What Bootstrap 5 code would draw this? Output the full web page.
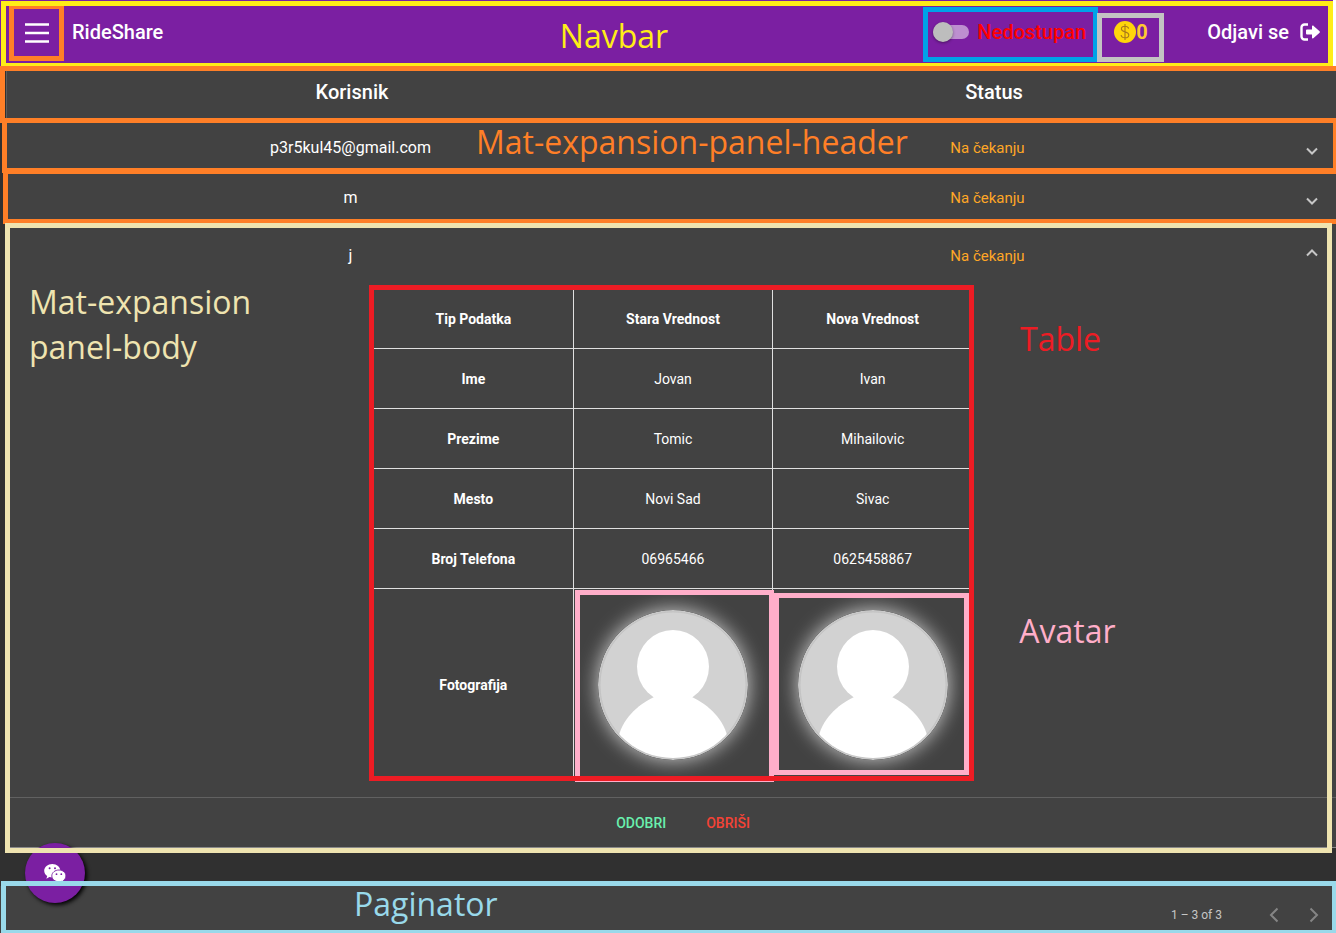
<!DOCTYPE html>
<html lang="sr-Latn">
<head>
<meta charset="utf-8">
<meta name="viewport" content="width=device-width, initial-scale=1">
<title>RideShare</title>
<link href="https://cdn.jsdelivr.net/npm/bootstrap@5.3.0/dist/css/bootstrap.min.css" rel="stylesheet">
<style>
  body { background: #303030; color: #fff; font-family: Roboto, sans-serif; font-size: 14px; line-height: 20px; overflow-x: hidden; }
  .app-bar { background: #7b1fa2; height: 66px; padding: 0 12px 2px 9px; font-size: 20px; font-weight: 500; border-right: 3px solid #fff; }
  .app-bar, .panel-row, .panel-open, .pager, .frame { position: relative; }

  /* annotation frames drawn over the interface */
  .frame::after { content: ""; position: absolute; inset: 0; border: 5px solid var(--tone); pointer-events: none; z-index: 5; }
  .frame-nav { --tone: #ffed17; }
  .frame-nav::after { inset: 1px 0 0 1px; border-bottom-width: 3px; }
  .frame-menu { --tone: #ff7f27; width: 55px; height: 57px; padding: 0 2px 0 0; margin-top: 1px; }
  .frame-toggle { --tone: #00a2e8; width: 175px; height: 55px; padding: 0 0 4px 10px; }
  .frame-coins { --tone: #c3c3c3; width: 67px; height: 49px; padding: 0 0 10px 17px; margin: 10px 43px 0 -1px; }
  .frame-head { --tone: #ff7f27; }
  .frame-head::after { inset: 0 0 -1px -7px; border-right: 0; }
  .frame-row { --tone: #ff7f27; }
  .frame-row::after { inset: -4px 0 -1px -4px; border-right-width: 3px; }
  .frame-row2::after { inset: -3px 0 -2px -3px; border-right: 0; }
  .frame-body { --tone: #efe4b0; }
  .frame-body::after { inset: 1px 4px -5px -1px; }
  .frame-table { --tone: #ed1c24; width: 600px; }
  .frame-table::after { inset: -3px -1px 0 -4px; z-index: 4; }
  .frame-pic { --tone: #ffaec9; }
  .frame-pic::after { inset: 1px -2px -2px 1px; z-index: 2; }
  .frame-pic2::after { inset: 4px 3px 5px 1px; }
  .frame-pager { --tone: #99d9ea; }
  .frame-pager::after { inset: -5px 0 0 1px; border-bottom-width: 3px; border-right-width: 4px; }

  .note { position: absolute; z-index: 6; font: 32px/45px "Open Sans", sans-serif; color: var(--tone); white-space: nowrap; pointer-events: none; }
  .note-nav { left: 42%; top: 13px; }
  .note-row { left: 470px; top: -3px; }
  .note-body { left: 23px; top: 57px; }
  .note-table { left: 647px; top: 28px; }
  .note-pic { left: 246px; top: 19px; }
  .note-pager { left: 354px; top: -5px; }

  .plain-btn { background: none; border: 0; padding: 0; color: inherit; font-weight: 500; }
  .slide { appearance: none; width: 36px; height: 14px; margin: 0; border-radius: 7px; background: #bd8fd0; position: relative; }
  .slide::before { content: ""; position: absolute; left: 0; top: -3px; width: 20px; height: 20px; border-radius: 50%; background: #bdbdbd; box-shadow: 0 1px 3px rgba(0,0,0,.4); }
  .label-off { color: #ff0000; }
  .coin-text { color: #ffc92e; font-weight: 700; }

  .panel-row, .panel-open { background: #424242; margin-left: 6px; }
  .head-row { height: 56px; padding: 0 21px 4px 24px; font-size: 20px; font-weight: 500; border-left: 1px solid #5c5c5c; }
  .panel-row button { height: 50px; }
  .panel-open .toggle-row { height: 66px; }
  .toggle-row { width: 100%; padding: 2px 18px 0 26px; font-weight: 400; }
  .user-name { font-size: 16px; }
  .pending { color: #ffa726; font-size: 15px; }
  .chev { width: 12px; height: 12px; }
  .chev-down { margin-top: 6px; }
  .chev-up { margin-bottom: 6px; }

  .diff-wrap { padding-left: 4px; }
  .diff { width: 600px; table-layout: fixed; border-collapse: collapse; text-align: center; }
  .diff th, .diff td { height: 60px; padding: 0; border: 1px solid #e0e0e0; text-align: center; }
  .diff th { font-weight: 700; }
  .diff tbody tr:last-child > * { height: 192px; }
  .portrait { width: 150px; height: 150px; border-radius: 50%; box-shadow: 0 0 20px rgba(255,255,255,.75); }
  .actions { margin-top: 16px; height: 51px; gap: 40px; padding-left: 24px; border-top: 1px solid #616161; border-bottom: 1px solid #8a8a8a; }
  .approve { color: #69f0ae; }
  .remove { color: #f44336; }

  .pager { background: #424242; margin-top: 38px; height: 47px; padding: 10px 14px 0 0; font-size: 12px; color: #c6c6c6; }
  .pager-arrows { gap: 24px; margin-left: 44px; color: #858585; }
  .chat { position: absolute; left: 25px; top: -43px; width: 60px; height: 60px; background: #7b1fa2; box-shadow: 2px 2px 4px #000; z-index: 3; }
</style>
</head>
<body>
<header class="app-bar frame frame-nav d-flex align-items-center">
  <button class="plain-btn frame frame-menu d-flex align-items-center justify-content-center" aria-label="Meni">
    <svg width="24" height="20" viewBox="0 0 24 20" stroke="#fff" stroke-width="2.4" aria-hidden="true"><path d="M0 1.5h24M0 10h24M0 18.5h24"/></svg>
  </button>
  <a href="#" class="text-white text-decoration-none ms-2">RideShare</a>
  <span class="note note-nav">Navbar</span>
  <div class="frame frame-toggle d-flex align-items-center ms-auto mt-1">
    <input type="checkbox" role="switch" class="slide" id="available">
    <label for="available" class="label-off ms-2">Nedostupan</label>
  </div>
  <div class="frame frame-coins d-flex align-items-center coin-text">
    <svg width="22" height="22" viewBox="0 0 22 22" aria-hidden="true"><circle cx="11" cy="11" r="11" fill="#ffd60a"/><path d="M14.7 7.6C14.2 6 12.8 5.200 11 5.200c-2 0-3.600 1-3.600 2.700 0 3.900 7.400 2 7.400 6 0 1.800-1.600 2.900-3.800 2.900-2.100 0-3.600-1-3.900-2.800M11 3v16" fill="none" stroke="#a8791d" stroke-width="1.100"/></svg>
    <span>0</span>
  </div>
  <a href="#" class="text-white text-decoration-none d-flex align-items-center">Odjavi se
    <svg class="ms-2" width="24" height="20" viewBox="0 0 24 20" aria-hidden="true"><path d="M11 2.500H7.500a3 3 0 0 0-3 3v9a3 3 0 0 0 3 3H11" fill="none" stroke="#fff" stroke-width="2.400"/><path d="M10 7.500h5V4.600c0-.9 1-1.300 1.600-.7l6 5.400c.4.400.4 1 0 1.400l-6 5.400c-.6.600-1.600.2-1.600-.7v-2.900h-5a1 1 0 0 1-1-1v-3a1 1 0 0 1 1-1z" fill="#fff"/></svg>
  </a>
</header>

<main>
  <div class="panel-row head-row frame frame-head d-flex align-items-center text-center">
    <div class="col">Korisnik</div>
    <div class="col">Status</div>
  </div>
  <div class="panel-row frame frame-row">
    <button class="plain-btn toggle-row d-flex align-items-center">
      <span class="col user-name">p3r5kul45@gmail.com</span><span class="col pending">Na čekanju</span>
      <svg class="chev chev-down" viewBox="0 0 12 12" fill="none" stroke="#c6c6c6" stroke-width="2" aria-hidden="true"><path d="M1 3.500l5 5 5-5"/></svg>
    </button>
    <span class="note note-row">Mat-expansion-panel-header</span>
  </div>
  <div class="panel-row frame frame-row frame-row2">
    <button class="plain-btn toggle-row d-flex align-items-center">
      <span class="col user-name">m</span><span class="col pending">Na čekanju</span>
      <svg class="chev chev-down" viewBox="0 0 12 12" fill="none" stroke="#c6c6c6" stroke-width="2" aria-hidden="true"><path d="M1 3.500l5 5 5-5"/></svg>
    </button>
  </div>
  <section class="panel-open frame frame-body">
    <button class="plain-btn toggle-row d-flex align-items-center" aria-expanded="true">
      <span class="col user-name">j</span><span class="col pending">Na čekanju</span>
      <svg class="chev chev-up" viewBox="0 0 12 12" fill="none" stroke="#c6c6c6" stroke-width="2" aria-hidden="true"><path d="M1 8.500l5-5 5 5"/></svg>
    </button>
    <div class="note note-body">Mat-expansion<br>panel-body</div>
    <div class="diff-wrap">
      <div class="frame frame-table mx-auto">
        <table class="diff">
          <thead><tr><th scope="col">Tip Podatka</th><th scope="col">Stara Vrednost</th><th scope="col">Nova Vrednost</th></tr></thead>
          <tbody>
            <tr><th scope="row">Ime</th><td>Jovan</td><td>Ivan</td></tr>
            <tr><th scope="row">Prezime</th><td>Tomic</td><td>Mihailovic</td></tr>
            <tr><th scope="row">Mesto</th><td>Novi Sad</td><td>Sivac</td></tr>
            <tr><th scope="row">Broj Telefona</th><td>06965466</td><td>0625458867</td></tr>
            <tr><th scope="row">Fotografija</th>
              <td class="frame frame-pic">
                <svg class="portrait" viewBox="0 0 150 150" role="img" aria-label="Stara fotografija"><defs><clipPath id="face"><circle cx="75" cy="75" r="73"/></clipPath></defs><circle cx="75" cy="75" r="75" fill="#c9c9c9"/><circle cx="75" cy="75" r="73" fill="#d2d2d2" stroke="#bcbcbc" stroke-width=".6"/><g id="person" clip-path="url(#face)" fill="#fff"><ellipse cx="75" cy="56.500" rx="36" ry="36.500"/><path d="M57 86.500C39 95 23 110 20 130v20h110v-20c-3-20-19-35-37-43.500z"/></g></svg>
              </td>
              <td class="frame frame-pic frame-pic2">
                <svg class="portrait" viewBox="0 0 150 150" role="img" aria-label="Nova fotografija"><circle cx="75" cy="75" r="75" fill="#c9c9c9"/><circle cx="75" cy="75" r="73" fill="#d2d2d2" stroke="#bcbcbc" stroke-width=".6"/><use href="#person"/></svg>
                <span class="note note-pic">Avatar</span>
              </td></tr>
          </tbody>
        </table>
        <span class="note note-table">Table</span>
      </div>
    </div>
    <div class="actions d-flex align-items-center justify-content-center">
      <button class="plain-btn approve">ODOBRI</button>
      <button class="plain-btn remove">OBRIŠI</button>
    </div>
  </section>
</main>

<footer class="pager frame frame-pager d-flex align-items-center justify-content-end">
  <button class="plain-btn chat rounded-circle d-flex align-items-center justify-content-center" aria-label="Poruke">
    <svg width="22" height="20" viewBox="0 0 22 20" aria-hidden="true"><path d="M8.300 1C3.800 1 .2 4 .2 7.800c0 2.200 1.200 4.100 3 5.300l-.8 2.600 3-1.600c1 .3 1.900.4 2.900.4 4.500 0 8.100-3 8.100-6.700S12.800 1 8.300 1z" fill="#fff"/><path d="M15 7c-4 0-7.200 2.600-7.200 5.900s3.200 5.900 7.200 5.900c.9 0 1.800-.2 2.500-.4l2.300 1.300-.6-2c1.600-1.100 2.700-2.900 2.700-4.800C21.900 9.600 18.900 7 15 7z" fill="#fff" stroke="#7b1fa2" stroke-width=".9"/><g fill="#7b1fa2"><circle cx="5.600" cy="5.300" r="1"/><circle cx="11" cy="5.300" r="1"/><circle cx="12.500" cy="11.200" r=".9"/><circle cx="17.300" cy="11.200" r=".9"/></g></svg>
  </button>
  <span class="note note-pager">Paginator</span>
  <span>1 – 3 of 3</span>
  <div class="pager-arrows d-flex">
    <button class="plain-btn" aria-label="Prethodna strana" disabled><svg width="16" height="16" viewBox="0 0 16 16" fill="none" stroke="#858585" stroke-width="2" aria-hidden="true"><path d="M11.500 1.500L5 8l6.500 6.500"/></svg></button>
    <button class="plain-btn" aria-label="Sledeća strana" disabled><svg width="16" height="16" viewBox="0 0 16 16" fill="none" stroke="#858585" stroke-width="2" aria-hidden="true"><path d="M4.500 1.500L11 8l-6.500 6.500"/></svg></button>
  </div>
</footer>
<script src="https://cdn.jsdelivr.net/npm/bootstrap@5.3.0/dist/js/bootstrap.bundle.min.js"></script>
</body>
</html>
